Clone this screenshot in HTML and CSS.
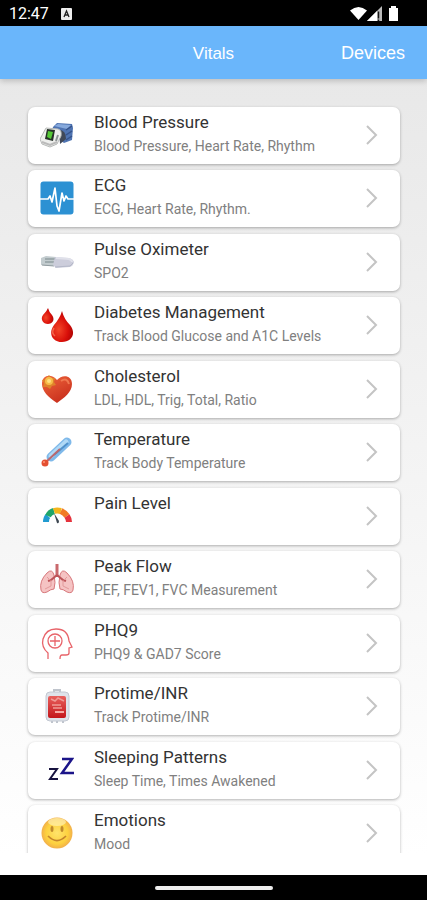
FILE: index.html
```html
<!DOCTYPE html>
<html lang="en">
<head>
    <meta charset="UTF-8">
    <meta name="viewport" content="width=device-width, initial-scale=1.0">
    <title>Vitals</title>
    <link rel="stylesheet" href="styles.css">
</head>
<body>
    <div class="status-bar">
        <span class="time">12:47</span>
        <svg class="status-app" width="11" height="12" viewBox="0 0 11 12">
            <rect width="11" height="12" rx="1" fill="#eee"/>
            <path d="M3 9l2.500-6 2.500 6M4 7h3" fill="none" stroke="#222" stroke-width="1.300"/>
        </svg>
        <svg class="status-icons" width="50" height="16" viewBox="0 0 50 16">
            <path d="M0 4.500Q8.500-2.500 17 4.500L8.500 14z" fill="#fff"/>
            <path d="M32 0v15H17z" fill="#bbb"/>
            <path d="M27 5v10H17z" fill="#fff"/>
            <path d="M28.500 5.500v7M28.500 13.500v1.500" stroke="#111" stroke-width="1.500"/>
            <path d="M39 2h2V0h5v2h2v13h-9z" fill="#fff"/>
        </svg>
    </div>

    <header class="header">
        <h1>Vitals</h1>
        <a class="devices" href="#devices">Devices</a>
    </header>

    <main class="content">
        <ul class="vitals-list">
            <li>
                <a class="card" href="#blood-pressure">
                    <svg class="icon" viewBox="0 0 34 34">
                        <path d="M13 9l4-4 15 1 1 4-1 12-8 3-13-9z" fill="#4f74b2"/>
                        <path d="M14 8l4-2 13 1-4 4z" fill="#86a9dc"/>
                        <path d="M26 12l6-4M26 17l6-4M26 22l6-4" stroke="#35538a" stroke-width="1.500"/>
                        <path d="M19 12q7 0 7 9l-6 5z" fill="#404958"/>
                        <path d="M6 10l12 1q4 1 3 7l-4 8-7 3-8-3-2-5z" fill="#eeefed" stroke="#b7bab8"/>
                        <path d="M7 11l8 1-2 11-8-2z" fill="#263128"/>
                        <path d="M8 13l5 1-2 7-4-2z" fill="#54c935"/>
                        <path d="M2 24l8 3 7-3" fill="none" stroke="#bbb" stroke-width="2"/>
                        <path d="M18 17l-2 6" stroke="#8d9395" stroke-width="2"/>
                    </svg>
                    <div class="text">
                        <h2>Blood Pressure</h2>
                        <p>Blood Pressure, Heart Rate, Rhythm</p>
                    </div>
                    <svg class="chevron" viewBox="0 0 12 20"><path d="M1 1l9 9-9 9"/></svg>
                </a>
            </li>
            <li>
                <a class="card" href="#ecg">
                    <svg class="icon" viewBox="0 0 34 34">
                        <rect x="0.500" y="0.500" width="33" height="33" rx="3" fill="#2c91d3"/>
                        <path d="M0 18h8l2-3 2 6 3-14 2 18 2 5 3-18 2 8 2-5 2 3h6" fill="none" stroke="#fff" stroke-width="1.700" stroke-linejoin="round"/>
                    </svg>
                    <div class="text">
                        <h2>ECG</h2>
                        <p>ECG, Heart Rate, Rhythm.</p>
                    </div>
                    <svg class="chevron" viewBox="0 0 12 20"><path d="M1 1l9 9-9 9"/></svg>
                </a>
            </li>
            <li>
                <a class="card" href="#pulse-oximeter">
                    <svg class="icon" viewBox="0 0 34 34">
                        <path d="M1 13l5-2 10 1v9H6l-5-1z" fill="#c3cccf"/>
                        <path d="M5 14h10M5 17h9" stroke="#939fa2" stroke-width="1.500"/>
                        <path d="M2 20l12 1" stroke="#939da1"/>
                        <path d="M15 12l14 1q4 1 5 4-1 4-4 5l-14 1-3-3z" fill="#cccddb"/>
                        <path d="M16 13l13 1q3 1 3 3" fill="none" stroke="#e0e1ea" stroke-width="2"/>
                        <path d="M15 22l15-1 3-3" fill="none" stroke="#b4b8c8"/>
                    </svg>
                    <div class="text">
                        <h2>Pulse Oximeter</h2>
                        <p>SPO2</p>
                    </div>
                    <svg class="chevron" viewBox="0 0 12 20"><path d="M1 1l9 9-9 9"/></svg>
                </a>
            </li>
            <li>
                <a class="card" href="#diabetes">
                    <svg class="icon" viewBox="0 0 34 34">
                        <defs>
                            <radialGradient id="blood" cx="0.350" cy="0.600" r="0.700">
                                <stop offset="0" stop-color="#f34528"/>
                                <stop offset="0.600" stop-color="#d90f09"/>
                                <stop offset="1" stop-color="#a90303"/>
                            </radialGradient>
                        </defs>
                        <path d="M8 0q1 4 4 7c4 6-1 9-4 9-5 0-8-5-5-9q4-4 5-7z" fill="url(#blood)"/>
                        <path d="M22 3q2 8 8 14c7 9 1 17-8 17-10 0-14-9-8-17q6-7 8-14z" fill="url(#blood)"/>
                        <path d="M14 20q-3 5 1 8" fill="none" stroke="#f5644b" stroke-width="1.500"/>
                    </svg>
                    <div class="text">
                        <h2>Diabetes Management</h2>
                        <p>Track Blood Glucose and A1C Levels</p>
                    </div>
                    <svg class="chevron" viewBox="0 0 12 20"><path d="M1 1l9 9-9 9"/></svg>
                </a>
            </li>
            <li>
                <a class="card" href="#cholesterol">
                    <svg class="icon" viewBox="0 0 34 34">
                        <defs>
                            <linearGradient id="heart" x1="0" y1="0" x2="0.600" y2="1">
                                <stop offset="0" stop-color="#ef673c"/>
                                <stop offset="1" stop-color="#c92f1d"/>
                            </linearGradient>
                        </defs>
                        <path d="M17 31C8 25 2 19 2 12 2 3 11 1 17 8 22 2 32 3 32 12c0 8-8 14-15 19z" fill="url(#heart)"/>
                        <path d="M21 9q6-4 8 3" fill="none" stroke="#f07850" stroke-width="2"/>
                        <path d="M9 3l2 3 4 0-1 4 2 3-4 1-2 3-3-2-4 0 1-4-2-3 4-1z" fill="#df832b"/>
                        <circle cx="9" cy="9" r="4" fill="#f7bc49"/>
                        <circle cx="9" cy="9" r="2" fill="#ffe180"/>
                    </svg>
                    <div class="text">
                        <h2>Cholesterol</h2>
                        <p>LDL, HDL, Trig, Total, Ratio</p>
                    </div>
                    <svg class="chevron" viewBox="0 0 12 20"><path d="M1 1l9 9-9 9"/></svg>
                </a>
            </li>
            <li>
                <a class="card" href="#temperature">
                    <svg class="icon" viewBox="0 0 34 34">
                        <path d="M11 22L27 7" stroke="#7fb9ea" stroke-width="9" stroke-linecap="round"/>
                        <path d="M11 21L26 7" stroke="#b0d9f6" stroke-width="5" stroke-linecap="round"/>
                        <path d="M14 20L28 8" stroke="#5091cb" stroke-width="2"/>
                        <path d="M6 27l14-13" stroke="#b9686f" stroke-width="2"/>
                        <circle cx="5" cy="28" r="3.500" fill="#e45032"/>
                        <circle cx="4" cy="27" r="1" fill="#ff9a7b"/>
                    </svg>
                    <div class="text">
                        <h2>Temperature</h2>
                        <p>Track Body Temperature</p>
                    </div>
                    <svg class="chevron" viewBox="0 0 12 20"><path d="M1 1l9 9-9 9"/></svg>
                </a>
            </li>
            <li>
                <a class="card" href="#pain-level">
                    <svg class="icon" viewBox="0 0 34 34">
                        <g fill="none" stroke-width="6">
                            <path d="M6 23q0-4 2-6" stroke="#219bd0"/>
                            <path d="M8 17q2-4 6-5" stroke="#20a66a"/>
                            <path d="M14 12q3-1 7 0" stroke="#f4b51c"/>
                            <path d="M21 12q4 2 6 5" stroke="#f17b24"/>
                            <path d="M27 17q2 3 2 6" stroke="#e5333d"/>
                        </g>
                        <path d="M14 14l5 8q0 3-2 2z" fill="#3c4650"/>
                    </svg>
                    <div class="text">
                        <h2>Pain Level</h2>
                    </div>
                    <svg class="chevron" viewBox="0 0 12 20"><path d="M1 1l9 9-9 9"/></svg>
                </a>
            </li>
            <li>
                <a class="card" href="#peak-flow">
                    <svg class="icon" viewBox="0 0 34 34">
                        <path d="M14 13q-2-7-7-2Q-1 19 1 28q1 4 6 2 4-3 7-3 2-6 0-14z" fill="#f5c3c3" stroke="#d7787c"/>
                        <path d="M20 13q2-7 7-2 8 8 6 17-1 4-6 2-4-3-7-3-2-6 0-14z" fill="#f5c3c3" stroke="#d7787c"/>
                        <path d="M17 2v12" stroke="#c9696d" stroke-width="3"/>
                        <path d="M17 13l-6 5-3 1M17 13l6 5 3 1" fill="none" stroke="#bd5459" stroke-width="2"/>
                        <path d="M11 18v6l-6 3M10 18l-3-3M23 18v6l6 3M24 18l3-3" fill="none" stroke="#e29a9b"/>
                    </svg>
                    <div class="text">
                        <h2>Peak Flow</h2>
                        <p>PEF, FEV1, FVC Measurement</p>
                    </div>
                    <svg class="chevron" viewBox="0 0 12 20"><path d="M1 1l9 9-9 9"/></svg>
                </a>
            </li>
            <li>
                <a class="card" href="#phq9">
                    <svg class="icon" viewBox="0 0 34 34">
                        <g fill="none" stroke="#e8646a" stroke-width="1.300">
                            <path d="M8 33v-6Q1 21 3 13 6 3 16 3q12 0 13 12l3 6-3 1v5q0 2-3 2h-4q-2 0-2 4"/>
                            <circle cx="15" cy="15" r="7"/>
                            <path d="M15 10v10M10 15h10"/>
                        </g>
                    </svg>
                    <div class="text">
                        <h2>PHQ9</h2>
                        <p>PHQ9 &amp; GAD7 Score</p>
                    </div>
                    <svg class="chevron" viewBox="0 0 12 20"><path d="M1 1l9 9-9 9"/></svg>
                </a>
            </li>
            <li>
                <a class="card" href="#protime">
                    <svg class="icon" viewBox="0 0 34 34">
                        <defs>
                            <linearGradient id="bag" x1="0" y1="0" x2="0" y2="1">
                                <stop offset="0" stop-color="#e8605d"/>
                                <stop offset="1" stop-color="#c4161b"/>
                            </linearGradient>
                        </defs>
                        <path d="M14 3V1h6v2M12 30v4M17 30v4M23 30v4" fill="none" stroke="#bfc4cc" stroke-width="2"/>
                        <rect x="6" y="3" width="23" height="29" rx="4" fill="#dfe3ea" stroke="#c3c8d2"/>
                        <rect x="8" y="7" width="18" height="22" rx="2" fill="url(#bag)"/>
                        <path d="M11 10l4 2 3-3 6 3M12 16h9M13 19h9" fill="none" stroke="#f09a95" stroke-width="1.500"/>
                        <path d="M15 23h9" stroke="#f7aaa5" stroke-width="2"/>
                    </svg>
                    <div class="text">
                        <h2>Protime/INR</h2>
                        <p>Track Protime/INR</p>
                    </div>
                    <svg class="chevron" viewBox="0 0 12 20"><path d="M1 1l9 9-9 9"/></svg>
                </a>
            </li>
            <li>
                <a class="card" href="#sleep">
                    <svg class="icon" viewBox="0 0 34 34">
                        <path d="M9 16h8l-7 10h8" fill="none" stroke="#17133f" stroke-width="2"/>
                        <path d="M22 6h10L22 20h12" fill="none" stroke="#1b1489" stroke-width="2.500"/>
                    </svg>
                    <div class="text">
                        <h2>Sleeping Patterns</h2>
                        <p>Sleep Time, Times Awakened</p>
                    </div>
                    <svg class="chevron" viewBox="0 0 12 20"><path d="M1 1l9 9-9 9"/></svg>
                </a>
            </li>
            <li>
                <a class="card" href="#emotions">
                    <svg class="icon" viewBox="0 0 34 34">
                        <defs>
                            <radialGradient id="smile" cx="0.500" cy="0.500" r="0.500">
                                <stop offset="0" stop-color="#ffe36b"/>
                                <stop offset="0.700" stop-color="#fdd13f"/>
                                <stop offset="1" stop-color="#f2b04a"/>
                            </radialGradient>
                        </defs>
                        <circle cx="17" cy="17" r="15.500" fill="url(#smile)"/>
                        <ellipse cx="17" cy="6" rx="9" ry="4" fill="#fff1b0" opacity="0.700"/>
                        <ellipse cx="12" cy="13" rx="1.500" ry="3" fill="#c08a2c"/>
                        <ellipse cx="22" cy="13" rx="1.500" ry="3" fill="#c08a2c"/>
                        <path d="M8 20q9 9 18 0" fill="none" stroke="#c4842c" stroke-width="1.700"/>
                    </svg>
                    <div class="text">
                        <h2>Emotions</h2>
                        <p>Mood</p>
                    </div>
                    <svg class="chevron" viewBox="0 0 12 20"><path d="M1 1l9 9-9 9"/></svg>
                </a>
            </li>
        </ul>
    </main>

    <div class="nav-bar">
        <div class="nav-handle"></div>
    </div>
</body>
</html>
```

FILE: styles.css
```css
* {
    box-sizing: border-box;
}
body {
    font-family: Roboto, Arial, sans-serif;
    margin: 0;
    height: 100vh;
    display: flex;
    flex-direction: column;
    background: linear-gradient(#e6e6e6, #ffffff 95%);
}
.status-bar {
    flex: none;
    height: 26px;
    padding: 2px 27px 0 9px;
    display: flex;
    align-items: center;
    background-color: #000;
    color: #fff;
}
.time {
    font-size: 16px;
    line-height: 24px;
}
.status-app {
    margin-left: 12px;
}
.status-icons {
    margin-left: auto;
}
.header {
    flex: none;
    height: 53px;
    padding: 2px 22px 0;
    display: grid;
    grid-template-columns: 1fr auto 1fr;
    align-items: center;
    background-color: #6ab6fb;
    color: #fff;
    font-family: "Liberation Sans", Arial, sans-serif;
    box-shadow: 0 2px 6px rgba(0,0,0,0.2);
}
.header h1 {
    grid-column: 2;
    margin: 0;
    font-size: 17px;
    font-weight: normal;
}
.devices {
    justify-self: end;
    color: #fff;
    font-size: 18px;
    text-decoration: none;
}
.content {
    flex: 1;
    min-height: 0;
    margin-bottom: 22px;
    padding: 28px 27px 0 28px;
    overflow-y: auto;
    scrollbar-width: none;
}
.vitals-list {
    list-style: none;
    margin: 0;
    padding: 0;
    display: flex;
    flex-direction: column;
    gap: 6px;
}
.vitals-list li:nth-child(even) {
    margin-bottom: 1px;
}
.card {
    display: flex;
    align-items: center;
    height: 57px;
    padding: 0 22px 1px 12px;
    background-color: #fff;
    border-radius: 7px;
    box-shadow: 0 1px 3px rgba(0,0,0,0.3);
    text-decoration: none;
}
.icon {
    flex: none;
    width: 34px;
    height: 34px;
}
.text {
    flex: 1;
    align-self: flex-start;
    margin-left: 20px;
    padding-top: 3px;
}
.text h2 {
    margin: 0;
    font-size: 17px;
    line-height: 24px;
    font-weight: normal;
    color: #333;
}
.text p {
    margin: 0;
    font-size: 14px;
    line-height: 24px;
    color: #808080;
}
.chevron {
    flex: none;
    width: 12px;
    height: 20px;
    fill: none;
    stroke: #c4c4c4;
    stroke-width: 2;
}
.nav-bar {
    flex: none;
    height: 25px;
    display: flex;
    justify-content: center;
    align-items: center;
    background-color: #000;
}
.nav-handle {
    width: 118px;
    height: 4px;
    border-radius: 2px;
    background-color: #eee;
}
```
